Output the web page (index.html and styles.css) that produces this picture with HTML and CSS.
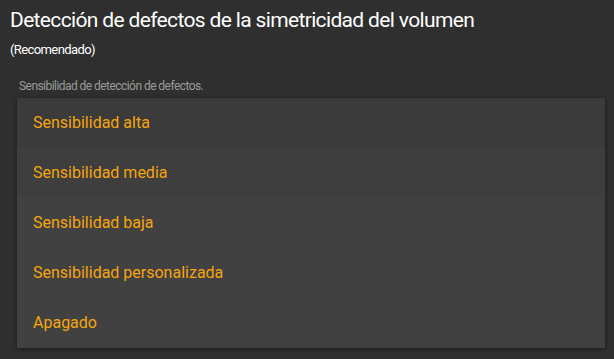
FILE: index.html
```html
<!DOCTYPE html>
<html lang="es">
<head>
<meta charset="utf-8">
<link rel="stylesheet" href="styles.css">
</head>
<body>
<div class="page">
  <h1 class="title">Detección de defectos de la simetricidad del volumen</h1>
  <div class="sub">(Recomendado)</div>
  <div class="label">Sensibilidad de detección de defectos.</div>
  <ul class="menu">
    <li class="item r1">Sensibilidad alta</li>
    <li class="item r2">Sensibilidad media</li>
    <li class="item">Sensibilidad baja</li>
    <li class="item">Sensibilidad personalizada</li>
    <li class="item">Apagado</li>
  </ul>
</div>
</body>
</html>
```
FILE: styles.css
```css
html, body {
  margin: 0;
  padding: 0;
  background: #2f2f2f;
  width: 614px;
  height: 359px;
  overflow: hidden;
}
.page {
  font-family: Roboto, "Liberation Sans", Arial, sans-serif;
  padding: 7px 9px 0 9px;
}
.title {
  margin: 0;
  font-size: 21px;
  font-weight: normal;
  color: #ffffff;
  line-height: 26px;
  letter-spacing: -0.65px;
  padding-left: 1px;
}
.sub {
  margin-top: 9px;
  font-size: 13px;
  color: #ffffff;
  line-height: 16px;
  letter-spacing: -0.6px;
  padding-left: 1px;
}
.label {
  margin-top: 20px;
  padding-left: 10px;
  font-size: 12px;
  color: #9a9a9a;
  line-height: 16px;
  letter-spacing: -0.55px;
}
.menu {
  list-style: none;
  margin: 4px 0 0 8px;
  padding: 0;
  width: 588px;
  background: #414141;
  box-shadow: 0 1px 5px rgba(0, 0, 0, 0.45);
}
.item {
  height: 50px;
  line-height: 50px;
  padding-left: 16px;
  font-size: 16px;
  color: #f5a50f;
}
.r1 { background: #3b3b3b; }
.r2 { background: #3e3e3e; }
```
